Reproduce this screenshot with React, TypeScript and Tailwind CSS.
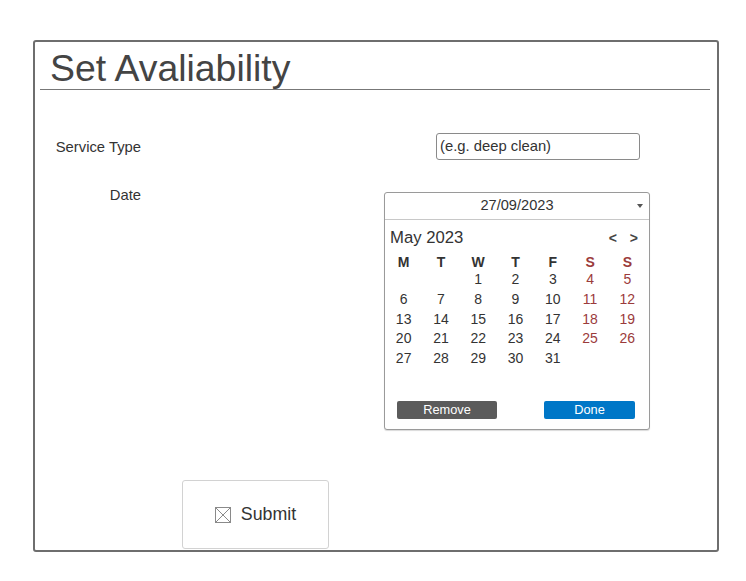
import React from 'react';

const weekdays = [
  { label: 'M', weekend: false },
  { label: 'T', weekend: false },
  { label: 'W', weekend: false },
  { label: 'T', weekend: false },
  { label: 'F', weekend: false },
  { label: 'S', weekend: true },
  { label: 'S', weekend: true },
];

const cells: (number | null)[] = [null, null, ...Array.from({ length: 31 }, (_, i) => i + 1)];

const DatePicker = () => {
  const rows: (number | null)[][] = [];
  for (let i = 0; i < cells.length; i += 7) rows.push(cells.slice(i, i + 7));

  return (
    <div className="w-[266px] h-[238px] border border-[#9a9a9a] rounded-[3px] bg-white flex flex-col shadow-[0_1px_1px_rgba(0,0,0,0.15)]">
      <div className="h-[27px] border-b border-[#c8c8c8] flex items-center relative">
        <span className="flex-1 text-center text-[14.6px] text-[#333]">27/09/2023</span>
        <span className="absolute right-[6px] top-[11px] w-0 h-0 border-l-[3.5px] border-r-[3.5px] border-t-[4px] border-l-transparent border-r-transparent border-t-[#555]" />
      </div>

      <div className="mt-[8px] pl-[5px] pr-[11px] flex items-center justify-between leading-[20px]">
        <span className="text-[16.7px] text-[#333]">May 2023</span>
        <div className="flex gap-[13px] text-[14px] font-bold text-[#444]">
          <span>&lt;</span>
          <span>&gt;</span>
        </div>
      </div>

      <div className="mt-[6px] w-[261px] grid grid-cols-7 text-center text-[14px]">
        {weekdays.map((d, i) => (
          <div
            key={i}
            className={`leading-[16px] font-bold ${d.weekend ? 'text-[#9b3b3b]' : 'text-[#333]'}`}
          >
            {d.label}
          </div>
        ))}
        {rows.map((row, r) =>
          Array.from({ length: 7 }).map((_, c) => {
            const n = row[c];
            return (
              <div
                key={`${r}-${c}`}
                className={`leading-[19.75px] ${c >= 5 ? 'text-[#9b3b3b]' : 'text-[#333]'}`}
              >
                {n ?? ''}
              </div>
            );
          })
        )}
      </div>

      <div className="mt-auto mb-[10px] pl-[12px] flex items-center">
        <button className="w-[100px] h-[18px] rounded-[2px] bg-[#5b5b5b] text-white text-[12.8px] leading-[18px]">
          Remove
        </button>
        <button className="ml-[47px] w-[91px] h-[18px] rounded-[2px] bg-[#0077c7] text-white text-[12.8px] leading-[18px]">
          Done
        </button>
      </div>
    </div>
  );
};

const App = () => {
  return (
    <div className="w-[746px] h-[581px] bg-white font-['Liberation_Sans',Arial,sans-serif] overflow-hidden">
      <div className="mt-[40px] ml-[33px] w-[686px] h-[512px] border-2 border-[#6e6e6e] rounded-[3px] flex flex-col">
        <div className="mt-[8px] ml-[5px] mr-[7px] pb-[3px] pl-[10px] border-b border-[#777]">
          <h1 className="text-[37.4px] leading-[36px] text-[#444]">Set Avaliability</h1>
        </div>

        <div className="mt-[43px] flex items-center">
          <label className="w-[106px] text-right text-[14.8px] leading-[20px] text-[#333]">Service Type</label>
          <div className="ml-[295px] w-[204px] h-[27px] border border-[#8a8a8a] rounded-[3px] flex items-center pl-[3px] text-[14.8px] text-[#333]">
            (e.g. deep clean)
          </div>
        </div>

        <div className="mt-[25px] flex items-start">
          <label className="w-[106px] text-right text-[14.8px] leading-[20px] text-[#333]">Date</label>
          <div className="ml-[243px] mt-[7px]">
            <DatePicker />
          </div>
        </div>

        <div className="mt-[50px] ml-[147px]">
          <button className="w-[147px] h-[69px] border border-[#d2d2d2] rounded-[3px] flex items-center justify-center gap-[10px] text-[17.8px] text-[#333]">
            <svg width="16" height="16" viewBox="0 0 16 16" fill="none" stroke="#8a8a8a" strokeWidth="1">
              <rect x="0.5" y="0.5" width="15" height="15" />
              <path d="M0.5 0.5L15.5 15.5M15.5 0.5L0.5 15.5" />
            </svg>
            Submit
          </button>
        </div>
      </div>
    </div>
  );
};

export default App;
